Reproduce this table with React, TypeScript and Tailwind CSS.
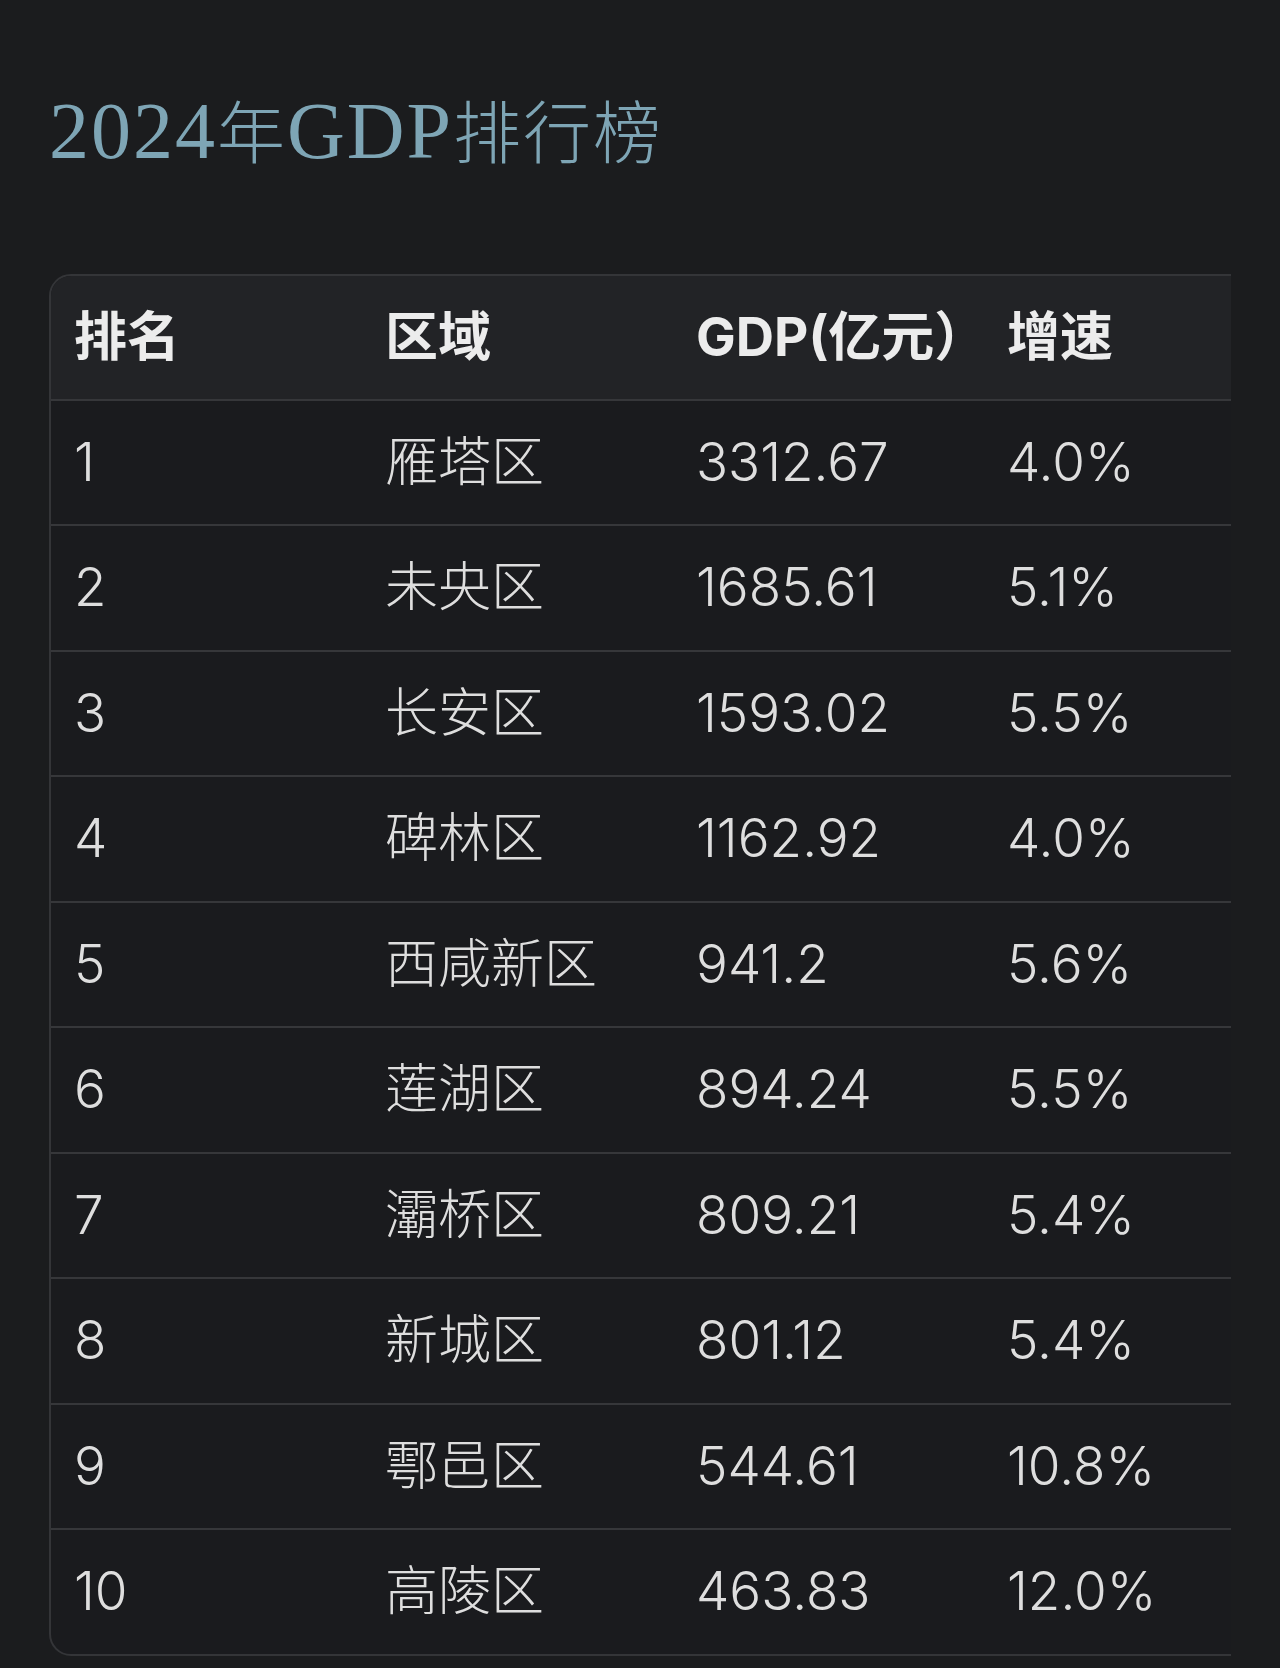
import React from 'react';

const rows = [
  ['1', '雁塔区', '3312.67', '4.0%'],
  ['2', '未央区', '1685.61', '5.1%'],
  ['3', '长安区', '1593.02', '5.5%'],
  ['4', '碑林区', '1162.92', '4.0%'],
  ['5', '西咸新区', '941.2', '5.6%'],
  ['6', '莲湖区', '894.24', '5.5%'],
  ['7', '灞桥区', '809.21', '5.4%'],
  ['8', '新城区', '801.12', '5.4%'],
  ['9', '鄠邑区', '544.61', '10.8%'],
  ['10', '高陵区', '463.83', '12.0%'],
];

export default function App() {
  return (
    <div className="min-h-[1668px] bg-[#1b1c1e] pl-[49px] pr-[49px] pt-[91px] font-['Inter','Noto_Sans_CJK_SC',sans-serif]">
      {/* Title */}
      <h1 className="flex items-baseline text-[80px] leading-none text-[#7ea5b5] font-['Liberation_Serif','Noto_Sans_CJK_SC',serif] tracking-[2px]">
        <span>2024</span>
        <span className="text-[68px] font-light">年</span>
        <span>GDP</span>
        <span className="text-[68px] font-light">排行榜</span>
      </h1>

      {/* Table, clipped on the right */}
      <div className="mt-[103px] overflow-hidden">
        <div className="w-[1262px] overflow-hidden rounded-[22px] border-2 border-[#343538] bg-[#1a1b1e]">
          <table className="w-full table-fixed border-collapse text-[53px]">
            <thead>
              <tr className="h-[123.5px] border-b-2 border-[#36373a] bg-[#222326] text-left text-[#ececec]">
                <th className="w-[311px] pl-[23px] font-bold">排名</th>
                <th className="w-[311px] pl-[23px] font-bold">区域</th>
                <th className="w-[311px] pl-[23px] font-bold">GDP(亿元）</th>
                <th className="pl-[23px] font-bold">增速</th>
              </tr>
            </thead>
            <tbody className="text-[#dedede]">
              {rows.map((r, i) => (
                <tr
                  key={r[0]}
                  className={i < rows.length - 1 ? 'h-[125.5px] border-b-2 border-[#36373a]' : 'h-[125px]'}
                >
                  <td className="pl-[23px] font-light">{r[0]}</td>
                  <td className="pl-[23px] font-light">{r[1]}</td>
                  <td className="pl-[23px] font-light">{r[2]}</td>
                  <td className="pl-[23px] font-light">{r[3]}</td>
                </tr>
              ))}
            </tbody>
          </table>
        </div>
      </div>
    </div>
  );
}
